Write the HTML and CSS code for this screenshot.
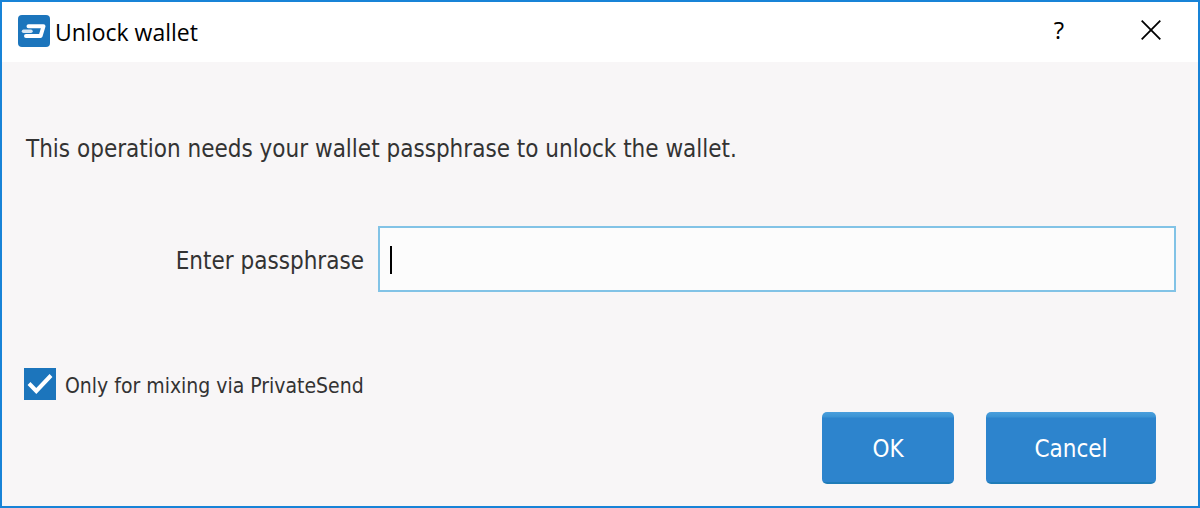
FILE: index.html
```html
<!DOCTYPE html>
<html lang="en">
<head>
<meta charset="utf-8">
<meta name="viewport" content="width=device-width, initial-scale=1">
<title>Unlock wallet</title>
<link rel="stylesheet" href="styles.css">
</head>
<body>
<main class="dialog">
  <header class="titlebar">
    <svg class="logo" viewBox="0 0 32 32" aria-hidden="true">
      <rect width="32" height="32" rx="4" fill="#1c75bc"/>
      <path d="M10.5 11.2H25.5L22.6 21H8" fill="none" stroke="#fff" stroke-width="4" stroke-linejoin="round" stroke-linecap="round"/>
      <path d="M5.5 16.2H13" fill="none" stroke="#d6e6f3" stroke-width="3.4" stroke-linecap="round"/>
    </svg>
    <h1 class="title">Unlock wallet</h1>
    <button class="window-button" type="button" aria-label="Help">?</button>
    <button class="window-button" type="button" aria-label="Close">
      <svg class="close-icon" viewBox="0 0 20 20" aria-hidden="true"><path d="M.7.7 19.3 19.3M19.3.7.7 19.3" stroke="#000" stroke-width="1.8"/></svg>
    </button>
  </header>
  <form class="content">
    <p class="message">This operation needs your wallet passphrase to unlock the wallet.</p>
    <div class="field">
      <label class="field-label" for="passphrase">Enter passphrase</label>
      <div class="input-wrap">
        <input class="input" id="passphrase" type="password">
      </div>
    </div>
    <label class="option">
      <input class="checkbox" type="checkbox" checked>
      <span class="option-text">Only for mixing via PrivateSend</span>
    </label>
    <div class="actions">
      <button class="button" type="submit">OK</button>
      <button class="button cancel" type="button">Cancel</button>
    </div>
  </form>
</main>
</body>
</html>
```
FILE: styles.css
```css
* { box-sizing: border-box; }

body {
  margin: 0;
  font-family: "DejaVu Sans Condensed", "Open Sans", "Noto Sans", sans-serif;
  font-size: 24px;
  line-height: 32px;
  color: #333;
}

.dialog {
  display: flex;
  flex-direction: column;
  min-height: 100vh;
  border: 2px solid #1883d7;
  background: #f8f6f7;
}

.titlebar {
  display: flex;
  align-items: center;
  height: 60px;
  padding: 0 1px 2px 16px;
  background: #fff;
  color: #000;
}

.logo { width: 32px; height: 32px; }

.title {
  flex: 1;
  margin: 0 0 0 5px;
  padding-top: 2px;
  font-family: "Open Sans", "Noto Sans", sans-serif;
  font-size: 23px;
  font-weight: 400;
}

.window-button {
  display: flex;
  align-items: center;
  justify-content: center;
  width: 92px;
  height: 56px;
  padding: 0 0 2px;
  border: 0;
  background: none;
  color: #000;
  font: 500 24px/32px "Open Sans", "Noto Sans", sans-serif;
}

.close-icon { width: 20px; height: 20px; }

.content {
  display: flex;
  flex: 1;
  flex-direction: column;
  padding: 71px 22px 22px;
}

.message {
  margin: 0;
  padding-left: 2px;
}

.field {
  display: flex;
  align-items: center;
  gap: 14px;
  margin-top: 61px;
}

.field-label {
  flex: 0 0 340px;
  padding-top: 4px;
  text-align: right;
}

.input-wrap {
  position: relative;
  flex: 1;
}

.input-wrap::before {
  content: "";
  position: absolute;
  top: 20px;
  left: 12px;
  width: 2px;
  height: 28px;
  background: #000;
}

.input {
  display: block;
  width: 100%;
  height: 66px;
  padding: 0 12px;
  border: 2px solid #82c3e6;
  border-radius: 0;
  outline: 0;
  background: #fcfcfc;
  font: inherit;
  caret-color: transparent;
}

.option {
  display: flex;
  align-items: center;
  align-self: flex-start;
  gap: 9px;
  height: 32px;
  margin-top: 76px;
  font-size: 21px;
}

.option-text { padding-top: 3px; }

.checkbox {
  appearance: none;
  width: 32px;
  height: 32px;
  margin: 0;
  background: #1c75bc;
}

.checkbox:checked {
  background-image: url("data:image/svg+xml,%3Csvg xmlns='http://www.w3.org/2000/svg' viewBox='0 0 32 32'%3E%3Cpath d='M5 15.5 12.3 23 27 7.5' fill='none' stroke='white' stroke-width='4'/%3E%3C/svg%3E");
}

.actions {
  display: flex;
  justify-content: flex-end;
  gap: 32px;
  margin-top: 12px;
  padding-right: 20px;
}

.button {
  min-width: 132px;
  height: 72px;
  padding: 2px 46px 0;
  border: 0;
  border-radius: 5px;
  background: linear-gradient(#4a9fdc, #3b93d4 5px, #2d84cd 6px, #2d84cd 70px, #1f7cb8 70px);
  color: #fff;
  font: inherit;
}

.cancel { min-width: 170px; }
```
